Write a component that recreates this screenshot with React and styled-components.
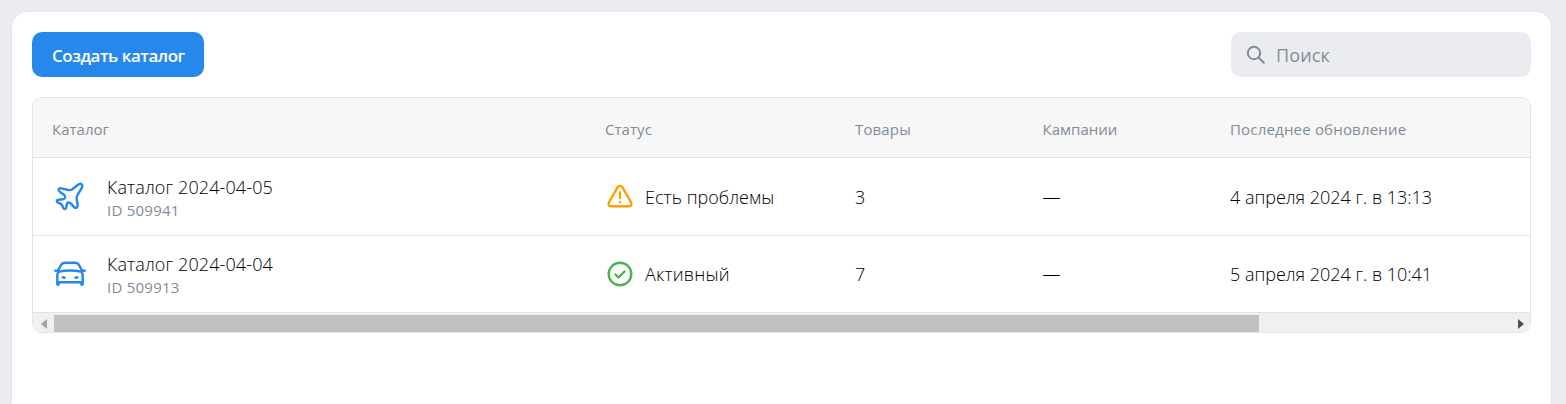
import React from 'react';
import styled, { createGlobalStyle } from 'styled-components';

const Global = createGlobalStyle`
  * { box-sizing: border-box; }
  body {
    margin: 0;
    background: #ebecf0;
    font-family: "Open Sans", "Noto Sans", sans-serif;
  }
  button, input { font: inherit; }
`;

const Page = styled.div`
  height: 404px;
  padding: 12px 15px 0 12px;
`;

const Panel = styled.main`
  height: 392px;
  padding: 20px;
  background: #fff;
  border-radius: 15px 15px 0 0;
  box-shadow: 0 0 2px rgba(0, 0, 0, 0.08);
`;

const Toolbar = styled.div`
  display: flex;
  justify-content: space-between;
  height: 45px;
  margin-bottom: 20px;
`;

const CreateButton = styled.button`
  width: 172px;
  padding: 2px 0 0 20px;
  border: 0;
  border-radius: 10px;
  background: #2688eb;
  color: #fff;
  font-size: 17px;
  font-weight: 600;
  text-align: left;
  white-space: nowrap;
  letter-spacing: -0.5px;
`;

const Search = styled.label`
  display: flex;
  align-items: center;
  gap: 10px;
  width: 300px;
  padding-left: 15px;
  border-radius: 10px;
  background: #ebecf0;
  color: #818c99;
`;

const SearchInput = styled.input`
  width: 200px;
  padding: 0;
  border: 0;
  outline: 0;
  background: transparent;
  font-size: 18px;
  letter-spacing: 0.1px;
  &::placeholder { color: #818c99; opacity: 1; }
`;

const Table = styled.section`
  width: 1499px;
  height: 236px;
  overflow: hidden;
  border: 1px solid #e1e3e6;
  border-radius: 10px;
`;

const Row = styled.div`
  display: grid;
  grid-template-columns: 553px 250px 187.5px 187.5px 1fr;
  align-items: center;
  height: ${(p) => p.$height}px;
  padding-left: 19px;
  border-bottom: 1px solid #e1e3e6;
`;

const HeadRow = styled(Row)`
  padding-top: 2px;
  background: #f7f7f7;
`;

const HeadCell = styled.div`
  color: #818c99;
  font-size: 15px;
  line-height: 20px;
  white-space: nowrap;
`;

const Cell = styled.div`
  display: flex;
  align-items: center;
  color: #000;
  font-size: 18px;
  font-weight: 360;
  line-height: 24px;
  white-space: nowrap;
`;

const Text = styled.span`
  letter-spacing: ${(p) => p.$spacing || 0}px;
`;

const CatalogInfo = styled.div`
  display: flex;
  flex-direction: column;
  margin-left: 17px;
`;

const CatalogId = styled.span`
  position: relative;
  top: 1px;
  color: #818c99;
  font-size: 15px;
  font-weight: 400;
  line-height: 20px;
  letter-spacing: 0.25px;
`;

const CatalogIcon = styled.svg`
  width: 40px;
  height: 40px;
  margin: 2px 0 0 -2px;
  flex: none;
  fill: none;
  stroke: #2688eb;
  stroke-width: 7.4;
  stroke-linecap: round;
  stroke-linejoin: round;
`;

const StatusIcon = styled.svg`
  width: 30px;
  height: 30px;
  margin-right: 10px;
  flex: none;
  fill: none;
  stroke: ${(p) => p.$color};
  stroke-width: 2.4;
  stroke-linecap: round;
  stroke-linejoin: round;
`;

const Scrollbar = styled.div`
  display: flex;
  align-items: center;
  height: 19px;
  padding-right: 6px;
  background: #f0f0f0;
`;

const ScrollThumb = styled.div`
  width: 1205px;
  height: 17px;
  margin: 1px auto 0 7px;
  background: #c1c1c1;
`;

const Arrow = styled.svg`
  width: 6px;
  height: 10px;
  margin-top: 2px;
  margin-left: ${(p) => p.$left || 0}px;
  fill: ${(p) => p.$color};
`;

const Plane = () => (
  <CatalogIcon viewBox="0 0 120 120">
    <path d="M95 19c3 3 1 11-4 18L83 50c-3 4-3 8-3 12l3 20c1 7-5 10-10 6L63 77c-6-6-12-4-13 3l-1 8c-1 6-7 6-9 2l-3-7c-1-3-3-4-6-6l-7-3c-5-3-4-8 1-9l12-1c8-1 12-7 6-13L29 41c-6-5-3-11 4-10l22 5c5 1 9 0 13-3l14-11c5-4 10-6 13-3Z" />
  </CatalogIcon>
);

const Car = () => (
  <CatalogIcon viewBox="0 0 120 120">
    <path d="m24 47 9-17c3-6 7-7 12-7h30c5 0 9 1 12 7l9 17" />
    <path d="M16 47h6m76 0h6M25 50l-3 9v29c0 2 4 2 4 0v-6h68v6c0 2 4 2 4 0V59l-3-9c-22-4-48-4-70 0Z" />
    <path d="m38 67 6 1m38-1-6 1" />
  </CatalogIcon>
);

const Warning = () => (
  <StatusIcon viewBox="0 0 30 30" $color="#ffa000">
    <path d="M12.6 5.2a2.8 2.8 0 0 1 4.8 0l8.7 15.3c1 1.8-.1 3.7-2.2 3.7H6.1c-2.1 0-3.2-1.9-2.2-3.7Z" />
    <path d="M15 10.5v5.4M15 20v.1" />
  </StatusIcon>
);

const Check = () => (
  <StatusIcon viewBox="0 0 30 30" $color="#4bb34b">
    <circle cx="15" cy="15" r="11.3" />
    <path d="m10.5 15.5 3 3 6-6" />
  </StatusIcon>
);

const columns = [
  { title: 'Каталог', spacing: 0 },
  { title: 'Статус', spacing: 0.05 },
  { title: 'Товары', spacing: 0.15 },
  { title: 'Кампании', spacing: 0.03 },
  { title: 'Последнее обновление', spacing: 0.19 },
];

const rows = [
  { Icon: Plane, Status: Warning, name: 'Каталог 2024-04-05', id: 'ID 509941', status: 'Есть проблемы', statusSpacing: 0.04, goods: '3', updated: '4 апреля 2024 г. в 13:13', height: 78 },
  { Icon: Car, Status: Check, name: 'Каталог 2024-04-04', id: 'ID 509913', status: 'Активный', statusSpacing: 0.22, goods: '7', updated: '5 апреля 2024 г. в 10:41', height: 77 },
];

export default function App() {
  return (
    <Page>
      <Global />
      <Panel>
        <Toolbar>
          <CreateButton>Создать каталог</CreateButton>
          <Search>
            <svg width="20" height="20" viewBox="0 0 20 20" fill="none" stroke="currentColor" strokeWidth="2" strokeLinecap="round">
              <circle cx="8" cy="8" r="6.2" />
              <path d="m12.7 12.7 5.1 5.1" />
            </svg>
            <SearchInput placeholder="Поиск" />
          </Search>
        </Toolbar>
        <Table>
          <HeadRow $height={60}>
            {columns.map((c) => (
              <HeadCell key={c.title}><Text $spacing={c.spacing}>{c.title}</Text></HeadCell>
            ))}
          </HeadRow>
          {rows.map(({ Icon, Status, ...r }) => (
            <Row key={r.id} $height={r.height}>
              <Cell>
                <Icon />
                <CatalogInfo>
                  <Text $spacing={0.12}>{r.name}</Text>
                  <CatalogId>{r.id}</CatalogId>
                </CatalogInfo>
              </Cell>
              <Cell><Status /><Text $spacing={r.statusSpacing}>{r.status}</Text></Cell>
              <Cell>{r.goods}</Cell>
              <Cell>—</Cell>
              <Cell><Text $spacing={-0.02}>{r.updated}</Text></Cell>
            </Row>
          ))}
          <Scrollbar>
            <Arrow viewBox="0 0 6 10" $left={8} $color="#a3a3a3"><path d="M6 0v10L0 5Z" /></Arrow>
            <ScrollThumb />
            <Arrow viewBox="0 0 6 10" $color="#505050"><path d="M0 0v10l6-5Z" /></Arrow>
          </Scrollbar>
        </Table>
      </Panel>
    </Page>
  );
}
